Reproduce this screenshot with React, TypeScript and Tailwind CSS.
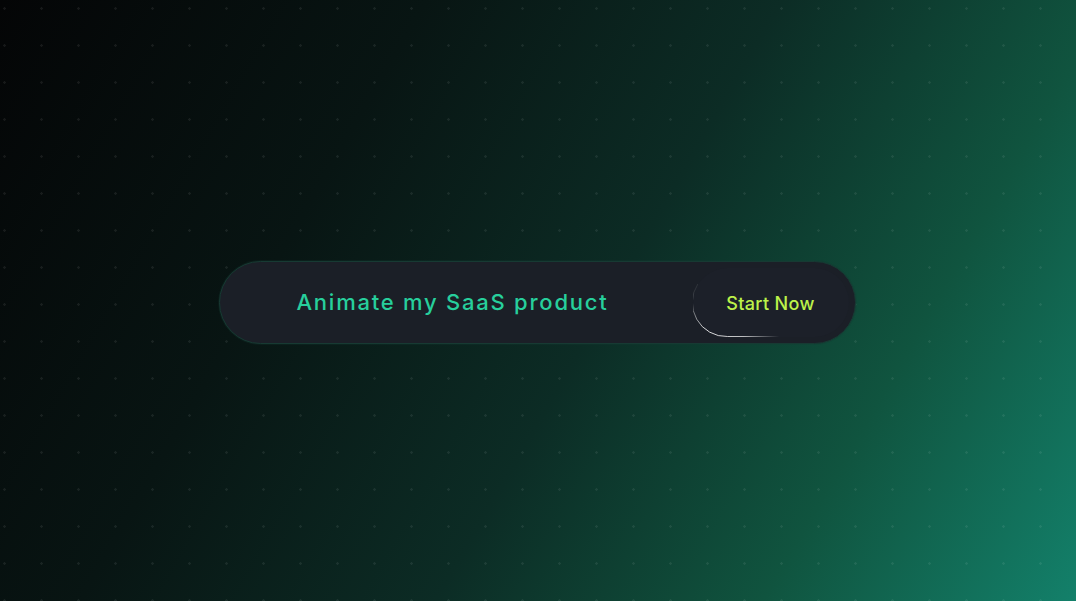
import React from 'react'

// Decorative stroke on the lower-left edge of the CTA
const ArcStroke: React.FC = () => (
  <svg
    className="pointer-events-none absolute inset-0"
    width="156"
    height="69"
    viewBox="0 0 156 69"
    fill="none"
  >
    <defs>
      <linearGradient id="arc" gradientUnits="userSpaceOnUse" x1="2" y1="14" x2="86" y2="69">
        <stop offset="0" stopColor="#ffffff" stopOpacity="0" />
        <stop offset="0.35" stopColor="#ffffff" stopOpacity="0.85" />
        <stop offset="0.7" stopColor="#ffffff" stopOpacity="0.7" />
        <stop offset="1" stopColor="#ffffff" stopOpacity="0" />
      </linearGradient>
    </defs>
    <path d="M4.8 16 A34 34 0 0 0 34.5 68.5 L86 68.5" stroke="url(#arc)" strokeWidth="1" />
  </svg>
)

const App: React.FC = () => {
  return (
    <div
      className="relative w-full h-[601px] overflow-hidden bg-[linear-gradient(120deg,#040506_0%,#081513_30%,#0c2c25_55%,#10543f_78%,#13806a_100%)]"
      style={{ fontFamily: 'Inter, "Noto Sans", sans-serif' }}
    >
      {/* Dot grid */}
      <div className="absolute inset-0 bg-[radial-gradient(circle,rgba(255,255,255,0.07)_1px,transparent_1.5px)] bg-[size:37px_37px] bg-[position:-14px_-10px]" />

      <div className="relative flex h-full items-center justify-center pt-[4px] pr-[2px]">
        <div className="flex h-[83px] w-[637px] items-center rounded-full border border-[#173a33] bg-[#1b1f27] p-[6px] shadow-[0_0_0_1px_rgba(20,60,50,0.25)]">
          <span className="flex-1 pl-[71px] text-[22px] font-medium tracking-[0.08em] text-[#27cf9c]">
            Animate my SaaS product
          </span>
          <button className="relative flex h-[69px] w-[156px] items-center justify-center rounded-full bg-[#1c2029] text-[18px] font-medium tracking-[0.02em] text-[#bdf24a]">
            <ArcStroke />
            <span className="pt-[1px]">Start Now</span>
          </button>
        </div>
      </div>
    </div>
  )
}

export default App
